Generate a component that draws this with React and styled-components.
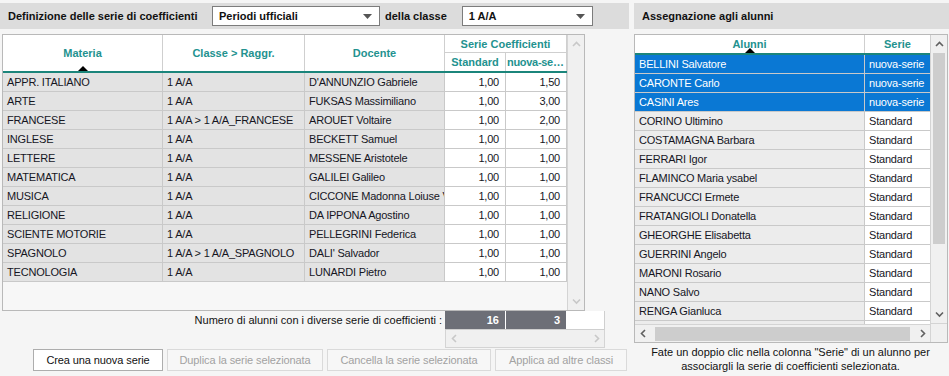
import React from 'react';
import styled, { createGlobalStyle } from 'styled-components';

const GlobalStyle = createGlobalStyle`
  body {
    margin: 0;
    background: #f5f5f5;
    font-family: "Liberation Sans", Arial, sans-serif;
    font-size: 11px;
    color: #16161f;
  }
`;

const Page = styled.div`
  width: 949px;
  height: 376px;
  padding-top: 3px;
  box-sizing: border-box;
  display: grid;
  grid-template-columns: 629px 315px;
  column-gap: 5px;
  overflow: hidden;
`;

const Column = styled.div`
  display: flex;
  flex-direction: column;
`;

const HeaderBar = styled.div`
  height: 26px;
  background: #dcdcdc;
  display: flex;
  align-items: center;
  padding-left: 8px;
  font-weight: bold;
  color: #111;
`;

const BarTitle = styled.span`
  flex: 0 0 ${(p) => p.$w || 'auto'};
  margin-left: ${(p) => p.$ml || '0'};
  margin-right: ${(p) => p.$mr || '0'};
  white-space: nowrap;
`;

const Select = styled.div`
  width: ${(p) => p.$w}px;
  height: 20px;
  box-sizing: border-box;
  border: 1px solid #7c7c7c;
  background: #fff;
  display: flex;
  align-items: center;
  justify-content: space-between;
  padding: 0 7px 0 6px;
  font-weight: bold;
  color: #111;
`;

const Caret = () => (
  <svg width="9" height="5" viewBox="0 0 9 5">
    <polygon points="0,0 9,0 4.5,5" fill="#555" />
  </svg>
);

const Chevron = ({ dir, color = '#c4c4c4' }) => {
  const pts = {
    up: '1,5 4.5,1.5 8,5',
    down: '1,1.5 4.5,5 8,1.5',
    left: '5,1 1.5,4.5 5,8',
    right: '2,1 5.5,4.5 2,8',
  }[dir];
  const vertical = dir === 'up' || dir === 'down';
  return (
    <svg width={vertical ? 9 : 7} height={vertical ? 7 : 9} viewBox={vertical ? '0 0 9 7' : '0 0 7 9'}>
      <polyline points={pts} fill="none" stroke={color} strokeWidth="1.6" />
    </svg>
  );
};

/* ---------- tables ---------- */

const TableBox = styled.div`
  margin-top: 5px;
  margin-left: ${(p) => p.$ml || 0}px;
  width: ${(p) => p.$w}px;
  height: ${(p) => p.$h}px;
  box-sizing: border-box;
  border: 1px solid #b9b9b9;
  display: flex;
  background: #f7f7f7;
`;

const TableMain = styled.div`
  flex: 1;
  display: flex;
  flex-direction: column;
  min-width: 0;
`;

const HeadGrid = styled.div`
  display: grid;
  grid-template-columns: ${(p) => p.$cols};
  grid-template-rows: ${(p) => p.$rows};
  background: #fff;
  border-bottom: 2px solid #1b857b;
`;

const HeadCell = styled.div`
  position: relative;
  grid-row: ${(p) => p.$row || 'auto'};
  grid-column: ${(p) => p.$col || 'auto'};
  display: flex;
  align-items: center;
  justify-content: center;
  color: #23928f;
  font-weight: bold;
  border-right: 1px solid #cfcfcf;
  border-bottom: ${(p) => (p.$split ? '1px solid #cfcfcf' : 'none')};
  white-space: nowrap;
  overflow: hidden;
  padding: 0 1px;
  box-sizing: border-box;
`;

const HeadText = styled.span`
  overflow: hidden;
  text-overflow: ellipsis;
  letter-spacing: -0.3px;
`;

const SortMark = styled.span`
  position: absolute;
  bottom: -1px;
  left: 50%;
  margin-left: -6px;
  width: 0;
  height: 0;
  border-left: 6px solid transparent;
  border-right: 6px solid transparent;
  border-bottom: 6px solid #000;
  filter: drop-shadow(0 -1px 0 #fff);
`;

const Row = styled.div`
  display: grid;
  grid-template-columns: ${(p) => p.$cols};
  height: 19px;
`;

const Cell = styled.div`
  height: 19px;
  box-sizing: border-box;
  line-height: 18px;
  border-right: 1px solid #c9c9c9;
  border-bottom: 1px solid #c9c9c9;
  background: ${(p) => (p.$sel ? '#0a78d4' : p.$bg)};
  color: ${(p) => (p.$sel ? '#fff' : '#16161f')};
  text-align: ${(p) => (p.$num ? 'right' : 'left')};
  padding: ${(p) => (p.$num ? '0 6px 0 0' : '0 0 0 4px')};
  white-space: nowrap;
  overflow: hidden;
  letter-spacing: -0.2px;
`;

const VScroll = styled.div`
  width: 17px;
  flex: 0 0 17px;
  border-left: 1px solid #d4d4d4;
  background: #f0f0f0;
  display: flex;
  flex-direction: column;
  box-sizing: border-box;
`;

const ScrollBtn = styled.div`
  height: ${(p) => p.$h || 18}px;
  flex: 0 0 ${(p) => p.$h || 18}px;
  width: ${(p) => (p.$w ? `${p.$w}px` : 'auto')};
  display: flex;
  align-items: center;
  justify-content: center;
  background: ${(p) => p.$bg || 'transparent'};
  border-top: ${(p) => (p.$corner ? '1px solid #d4d4d4' : 'none')};
`;

const Track = styled.div`
  flex: 1;
  padding: 0 2px;
`;

const Thumb = styled.div`
  height: ${(p) => p.$h}px;
  background: #cdcdcd;
`;

const HScroll = styled.div`
  height: 18px;
  flex: 0 0 18px;
  box-sizing: border-box;
  display: flex;
  align-items: center;
  background: #f0f0f0;
  border-top: 1px solid #d4d4d4;
`;

const HThumb = styled.div`
  flex: 1;
  height: 14px;
  margin: 0 4px;
  background: #cdcdcd;
`;

/* ---------- left footer ---------- */

const CountRow = styled.div`
  display: flex;
  height: 19px;
`;

const CountLabel = styled.div`
  flex: 1;
  text-align: right;
  line-height: 19px;
  padding-right: 3px;
  color: #111;
`;

const CountBox = styled.div`
  display: grid;
  grid-template-columns: 61px 61px 38px;
  margin-right: 24px;
  border-bottom: 1px solid #cfcfcf;
`;

const CountCell = styled.div`
  background: ${(p) => (p.$dark ? '#6d6f77' : '#fff')};
  color: #fff;
  font-weight: bold;
  text-align: right;
  padding-right: 6px;
  line-height: 18px;
  border-right: 1px solid ${(p) => (p.$dark ? '#fff' : '#cfcfcf')};
`;

const FootScroll = styled.div`
  width: 160px;
  height: 18px;
  margin-left: auto;
  margin-right: 24px;
  box-sizing: border-box;
  border: 1px solid #d4d4d4;
  border-top: none;
  background: #f0f0f0;
  display: flex;
  align-items: center;
  justify-content: space-between;
  padding: 0 4px 0 5px;
`;

const ButtonRow = styled.div`
  display: flex;
  gap: 4px;
  margin-top: 1px;
  padding-left: 33px;
`;

const Button = styled.button`
  height: 22px;
  width: ${(p) => p.$w}px;
  padding: 0;
  font-family: inherit;
  font-size: 11px;
  background: ${(p) => (p.disabled ? '#f7f7f7' : '#fff')};
  border: 1px solid ${(p) => (p.disabled ? '#dadada' : '#adadad')};
  color: ${(p) => (p.disabled ? '#a2a2a2' : '#111')};
  letter-spacing: -0.1px;
`;

const Hint = styled.div`
  margin-top: 2px;
  text-align: center;
  line-height: 14px;
  color: #111;
  padding-right: 2px;
`;

const Rows = styled.div`
  flex: 1;
  overflow: hidden;
`;

/* ---------- data ---------- */

const LEFT_COLS = '160px 142px 140px 61px 61px';

const subjects = [
  ['APPR. ITALIANO', '1 A/A', "D'ANNUNZIO Gabriele", '1,00', '1,50'],
  ['ARTE', '1 A/A', 'FUKSAS Massimiliano', '1,00', '3,00'],
  ['FRANCESE', '1 A/A > 1 A/A_FRANCESE', 'AROUET Voltaire', '1,00', '2,00'],
  ['INGLESE', '1 A/A', 'BECKETT Samuel', '1,00', '1,00'],
  ['LETTERE', '1 A/A', 'MESSENE Aristotele', '1,00', '1,00'],
  ['MATEMATICA', '1 A/A', 'GALILEI Galileo', '1,00', '1,00'],
  ['MUSICA', '1 A/A', 'CICCONE Madonna Loiuse Veronica', '1,00', '1,00'],
  ['RELIGIONE', '1 A/A', 'DA IPPONA Agostino', '1,00', '1,00'],
  ['SCIENTE MOTORIE', '1 A/A', 'PELLEGRINI Federica', '1,00', '1,00'],
  ['SPAGNOLO', '1 A/A > 1 A/A_SPAGNOLO', "DALI' Salvador", '1,00', '1,00'],
  ['TECNOLOGIA', '1 A/A', 'LUNARDI Pietro', '1,00', '1,00'],
];

const RIGHT_COLS = '230px 66px';

const students = [
  ['BELLINI Salvatore', 'nuova-serie', true],
  ['CARONTE Carlo', 'nuova-serie', true],
  ['CASINI Ares', 'nuova-serie', true],
  ['CORINO Ultimino', 'Standard'],
  ['COSTAMAGNA Barbara', 'Standard'],
  ['FERRARI Igor', 'Standard'],
  ['FLAMINCO Maria ysabel', 'Standard'],
  ['FRANCUCCI Ermete', 'Standard'],
  ['FRATANGIOLI Donatella', 'Standard'],
  ['GHEORGHE Elisabetta', 'Standard'],
  ['GUERRINI Angelo', 'Standard'],
  ['MARONI Rosario', 'Standard'],
  ['NANO Salvo', 'Standard'],
  ['RENGA Gianluca', 'Standard'],
  ['', ''],
];

export default function App() {
  return (
    <>
      <GlobalStyle />
      <Page>
        <Column>
          <HeaderBar>
            <BarTitle $w="204px">Definizione delle serie di coefficienti</BarTitle>
            <Select $w={168}>
              <span>Periodi ufficiali</span>
              <Caret />
            </Select>
            <BarTitle $ml="5px" $mr="15px">della classe</BarTitle>
            <Select $w={131}>
              <span>1 A/A</span>
              <Caret />
            </Select>
          </HeaderBar>

          <TableBox $w={583} $h={277} $ml={2}>
            <TableMain>
              <HeadGrid $cols={LEFT_COLS} $rows="18px 18px">
                <HeadCell $row="1 / 3">
                  Materia
                  <SortMark />
                </HeadCell>
                <HeadCell $row="1 / 3">Classe &gt; Raggr.</HeadCell>
                <HeadCell $row="1 / 3">Docente</HeadCell>
                <HeadCell $col="4 / 6" $split>
                  Serie Coefficienti
                </HeadCell>
                <HeadCell>Standard</HeadCell>
                <HeadCell>
                  <HeadText>nuova-serie</HeadText>
                </HeadCell>
              </HeadGrid>
              <Rows>
                {subjects.map((r) => (
                  <Row key={r[0]} $cols={LEFT_COLS}>
                    <Cell $bg="#e3e3e3">{r[0]}</Cell>
                    <Cell $bg="#e3e3e3">{r[1]}</Cell>
                    <Cell $bg="#e3e3e3">{r[2]}</Cell>
                    <Cell $bg="#fff" $num>{r[3]}</Cell>
                    <Cell $bg="#fff" $num>{r[4]}</Cell>
                  </Row>
                ))}
              </Rows>
            </TableMain>
            <VScroll>
              <ScrollBtn>
                <Chevron dir="up" color="#c8c8c8" />
              </ScrollBtn>
              <Track />
              <ScrollBtn>
                <Chevron dir="down" color="#c8c8c8" />
              </ScrollBtn>
            </VScroll>
          </TableBox>

          <CountRow>
            <CountLabel>Numero di alunni con i diverse serie di coefficienti :</CountLabel>
            <CountBox>
              <CountCell $dark>16</CountCell>
              <CountCell $dark>3</CountCell>
              <CountCell />
            </CountBox>
          </CountRow>
          <FootScroll>
            <Chevron dir="left" color="#c8c8c8" />
            <Chevron dir="right" color="#c8c8c8" />
          </FootScroll>

          <ButtonRow>
            <Button $w={130}>Crea una nuova serie</Button>
            <Button $w={156} disabled>
              Duplica la serie selezionata
            </Button>
            <Button $w={164} disabled>
              Cancella la serie selezionata
            </Button>
            <Button $w={132} disabled>
              Applica ad altre classi
            </Button>
          </ButtonRow>
        </Column>

        <Column>
          <HeaderBar>Assegnazione agli alunni</HeaderBar>
          <TableBox $w={314} $h={309}>
            <TableMain>
              <HeadGrid $cols={RIGHT_COLS} $rows="18px">
                <HeadCell>
                  Alunni
                  <SortMark />
                </HeadCell>
                <HeadCell>Serie</HeadCell>
              </HeadGrid>
              <Rows>
                {students.map((s, i) => (
                  <Row key={i} $cols={RIGHT_COLS}>
                    <Cell $bg="#ececec" $sel={s[2]}>{s[0]}</Cell>
                    <Cell $bg="#fff" $sel={s[2]}>{s[1]}</Cell>
                  </Row>
                ))}
              </Rows>
              <HScroll>
                <ScrollBtn $h={16} $w={14}>
                  <Chevron dir="left" color="#606060" />
                </ScrollBtn>
                <HThumb />
                <ScrollBtn $h={16} $w={14}>
                  <Chevron dir="right" color="#606060" />
                </ScrollBtn>
              </HScroll>
            </TableMain>
            <VScroll>
              <ScrollBtn>
                <Chevron dir="up" color="#606060" />
              </ScrollBtn>
              <Track>
                <Thumb $h={191} />
              </Track>
              <ScrollBtn>
                <Chevron dir="down" color="#606060" />
              </ScrollBtn>
              <ScrollBtn $bg="#f0f0f0" $corner />
            </VScroll>
          </TableBox>
          <Hint>
            Fate un doppio clic nella colonna "Serie" di un alunno per
            <br />
            associargli la serie di coefficienti selezionata.
          </Hint>
        </Column>
      </Page>
    </>
  );
}
